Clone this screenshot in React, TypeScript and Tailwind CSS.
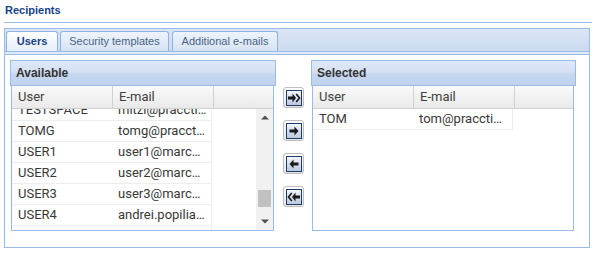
import React from 'react';

type Row = { user: string; email: string };

const AVAILABLE: Row[] = [
  { user: 'TESTSPACE', email: 'mitzi@praccticenter.com' },
  { user: 'TOMG', email: 'tomg@praccticenter.com' },
  { user: 'USER1', email: 'user1@marcopolo.ro' },
  { user: 'USER2', email: 'user2@marcopolo.ro' },
  { user: 'USER3', email: 'user3@marcopolo.ro' },
  { user: 'USER4', email: 'andrei.popilian@marcopolo.ro' },
  { user: 'USER5', email: 'user5@marcopolo.ro' },
];

const SELECTED: Row[] = [{ user: 'TOM', email: 'tom@praccticenter.com' }];

const HEAD_BG = 'bg-[linear-gradient(#dde8f7,#d5e2f4_45%,#c6d7ef_55%,#c0d2ed)]';

function PanelHeader({ title, width }: { title: string; width: string }) {
  return (
    <div
      className={`${width} h-[26px] border border-[#99bbe8] ${HEAD_BG} flex items-center pl-[5px] text-[12px] font-bold text-[#333] font-['Liberation_Sans',Arial,sans-serif]`}
    >
      {title}
    </div>
  );
}

function ColumnHeader() {
  return (
    <div className="h-[23px] flex border-b border-[#d0d0d0] bg-[linear-gradient(#fafafa,#f2f2f2_50%,#e9e9ea)] text-[13px] text-[#404040]">
      {['User', 'E-mail'].map((h) => (
        <div key={h} className="w-[101px] shrink-0 border-r border-[#d0d0d0] pl-[6px] flex items-center last:w-[100px]">
          {h}
        </div>
      ))}
      <div className="flex-1" />
    </div>
  );
}

function GridRow({ r }: { r: Row }) {
  return (
    <div className="w-[200px] h-[21px] flex border-b border-r border-[#ededed] bg-white text-[13px] text-[#383838]">
      <div className="w-[100px] shrink-0 pl-[6px] leading-[20px] truncate">{r.user}</div>
      <div className="w-[99px] shrink-0 pl-[6px] pr-[4px] leading-[20px] truncate">{r.email}</div>
    </div>
  );
}

function Scrollbar() {
  return (
    <div className="w-[17px] h-full bg-[#f1f1f1] flex flex-col items-center">
      <div className="h-[17px] flex items-center justify-center">
        <svg width="8" height="5" viewBox="0 0 8 5">
          <path d="M0 4.5L4 0.5L8 4.5z" fill="#505050" />
        </svg>
      </div>
      <div className="flex-1 w-full px-[2px]">
        <div className="mt-[64px] h-[17px] w-full bg-[#c1c1c1]" />
      </div>
      <div className="h-[17px] flex items-center justify-center">
        <svg width="8" height="5" viewBox="0 0 8 5">
          <path d="M0 0.5L4 4.5L8 0.5z" fill="#505050" />
        </svg>
      </div>
    </div>
  );
}

function MoveButton({ kind }: { kind: 'all-right' | 'right' | 'left' | 'all-left' }) {
  const flip = kind === 'left' || kind === 'all-left';
  const double = kind === 'all-right' || kind === 'all-left';
  return (
    <div className="w-[21px] h-[21px] rounded-[3px] border border-[#bdbdbd] bg-[linear-gradient(#ffffff,#e4e4e4)] flex items-center justify-center">
      <div className="w-[16px] h-[16px] border border-[#1d3c6c] bg-[linear-gradient(#f3f6fb,#d4deeb_50%,#bccadd)] flex items-center justify-center">
        <svg width="14" height="14" viewBox="0 0 14 14" style={flip ? { transform: 'scaleX(-1)' } : undefined}>
          {double ? (
            <>
              <path d="M1 5.5h4.5V2.5L9 7l-3.5 4.5V8.5H1z" fill="#1a1a1a" />
              <path d="M9.2 3l3.3 4-3.3 4" fill="none" stroke="#1a1a1a" strokeWidth="1.6" />
            </>
          ) : (
            <path d="M2.5 5.5h5V2.5L11.5 7l-4 4.5V8.5h-5z" fill="#1a1a1a" />
          )}
        </svg>
      </div>
    </div>
  );
}

export default function App() {
  return (
    <div className="w-[601px] h-[259px] bg-white pl-[4px] font-['Roboto','Liberation_Sans',sans-serif]">
      <div className="w-[588px] h-[23px] border-b border-[#99bbe8] pl-[1px] pt-[4px] text-[11px] leading-[13px] font-bold text-[#15428b] font-['Liberation_Sans',Tahoma,sans-serif]">
        Recipients
      </div>

      <div className="w-[586px] mt-[5px]">
        <div className="h-[23px] border-t border-x border-[#99bbe8] bg-[linear-gradient(#dbe6f5,#cbdaef)] flex items-end pl-[1px] gap-[2px] text-[11px] font-['Liberation_Sans',Tahoma,sans-serif]">
          <div className="w-[52px] h-[20px] rounded-t-[3px] border border-b-0 border-[#8db2e3] bg-[linear-gradient(#ffffff,#e5eefa)] flex items-center justify-center font-bold text-[#15428b]">
            Users
          </div>
          <div className="w-[109px] h-[20px] rounded-t-[3px] border border-b-0 border-[#8db2e3] bg-[linear-gradient(#eef4fc,#d6e3f4)] flex items-center justify-center text-[#4a6386]">
            Security templates
          </div>
          <div className="ml-px w-[106px] h-[20px] rounded-t-[3px] border border-b-0 border-[#8db2e3] bg-[linear-gradient(#eef4fc,#d6e3f4)] flex items-center justify-center text-[#4a6386]">
            Additional e-mails
          </div>
        </div>
        <div className="h-[3px] border-t border-x border-[#99bbe8] bg-[#dfe9f7]" />

        <div className="h-[194px] border border-[#99bbe8] pt-[5px] pl-[5px] flex">
          <div className="flex flex-col">
            <PanelHeader title="Available" width="w-[266px]" />
            <div className="ml-px w-[263px] h-[145px] border-x border-b border-[#99bbe8] flex flex-col">
              <ColumnHeader />
              <div className="flex-1 flex overflow-hidden">
                <div className="flex-1 overflow-hidden">
                  <div className="-mt-[9px]">
                    {AVAILABLE.map((r) => (
                      <GridRow key={r.user} r={r} />
                    ))}
                  </div>
                </div>
                <Scrollbar />
              </div>
            </div>
          </div>

          <div className="w-[21px] mx-[7px] pt-[27px] flex flex-col gap-[12px]">
            <MoveButton kind="all-right" />
            <MoveButton kind="right" />
            <MoveButton kind="left" />
            <MoveButton kind="all-left" />
          </div>

          <div className="flex flex-col">
            <PanelHeader title="Selected" width="w-[265px]" />
            <div className="ml-px w-[262px] h-[145px] border-x border-b border-[#99bbe8] flex flex-col">
              <ColumnHeader />
              <div className="flex-1 overflow-hidden">
                {SELECTED.map((r) => (
                  <GridRow key={r.user} r={r} />
                ))}
              </div>
            </div>
          </div>
        </div>
      </div>
    </div>
  );
}
